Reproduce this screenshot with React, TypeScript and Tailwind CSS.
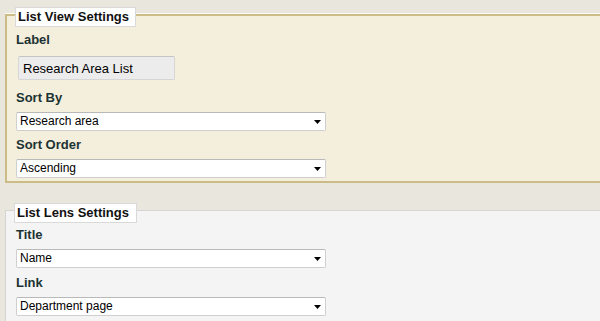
import { ChangeEvent, useState } from "react";

const font = { fontFamily: '"Liberation Sans", Arial, sans-serif' };

interface SelectBoxProps {
  value: string;
  options: string[];
  onChange: (v: string) => void;
}

const SelectBox = ({ value, options, onChange }: SelectBoxProps) => {
  return (
    <div className="relative mt-[6px] flex h-[19px] w-[310px] items-center rounded-[2px] border border-[#cfcfcf] border-t-[#b9b9b9] bg-white pl-[3px] text-[12px] text-black">
      <span className="leading-[17px]">{value}</span>
      {/* Dropdown arrow */}
      <svg
        className="pointer-events-none absolute right-[4px] top-[7px]"
        width="7"
        height="4"
        viewBox="0 0 7 4"
      >
        <path d="M0 0h7L3.5 4z" fill="#000" />
      </svg>
      <select
        value={value}
        onChange={(e: ChangeEvent<HTMLSelectElement>) => onChange(e.target.value)}
        className="absolute inset-0 cursor-pointer opacity-0"
      >
        {options.map((o) => (
          <option key={o}>{o}</option>
        ))}
      </select>
    </div>
  );
};

const FieldLabel = ({ children, className }: { children: string; className: string }) => (
  <div className={`h-[16px] text-[13px] font-bold leading-[16px] text-[#1d3333] ${className}`}>{children}</div>
);

const Legend = ({ children, width }: { children: string; width: string }) => (
  <div
    className={`ml-[8px] h-[20px] ${width} border border-[#d9d9d9] bg-white pl-[2px] text-[13px] font-bold leading-[18px] text-[#111]`}
  >
    {children}
  </div>
);

export default function App() {
  const [sortBy, setSortBy] = useState("Research area");
  const [order, setOrder] = useState("Ascending");
  const [title, setTitle] = useState("Name");
  const [link, setLink] = useState("Department page");

  return (
    <div className="h-[321px] w-[600px] overflow-hidden bg-[#e9e6de] pl-[5px] pt-[13px]" style={font}>
      {/* List View Settings */}
      <div className="border-t border-[#fbfaf4]">
        <div className="h-[169px] border-y-2 border-l-2 border-[#cbbb86] bg-[#f4efdc] pl-[9px]">
          <div className="-ml-[9px] -mt-[9px]">
            <Legend width="w-[121px]">List View Settings</Legend>
          </div>
          <FieldLabel className="mt-[5px]">Label</FieldLabel>
          <input
            defaultValue="Research Area List"
            className="ml-[2px] mt-[8px] h-[24px] w-[157px] rounded-[2px] border border-[#d6d6d6] border-t-[#c4c4c4] bg-[#ececec] pl-[4px] text-[13px] text-black outline-none"
            style={font}
          />
          <FieldLabel className="mt-[10px]">Sort By</FieldLabel>
          <SelectBox value={sortBy} options={["Research area", "Name", "Date"]} onChange={setSortBy} />
          <FieldLabel className="mt-[6px]">Sort Order</FieldLabel>
          <SelectBox value={order} options={["Ascending", "Descending"]} onChange={setOrder} />
        </div>
      </div>

      {/* List Lens Settings */}
      <div className="mt-[27px] h-[120px] border-l border-t border-[#d4d4d4] bg-[#f4f4f4] pl-[10px]">
        <div className="-ml-[10px] -mt-[8px]">
          <Legend width="w-[123px]">List Lens Settings</Legend>
        </div>
        <FieldLabel className="mt-[4px]">Title</FieldLabel>
        <SelectBox value={title} options={["Name", "Title"]} onChange={setTitle} />
        <FieldLabel className="mt-[7px]">Link</FieldLabel>
        <SelectBox value={link} options={["Department page", "Profile page"]} onChange={setLink} />
      </div>
    </div>
  );
}
